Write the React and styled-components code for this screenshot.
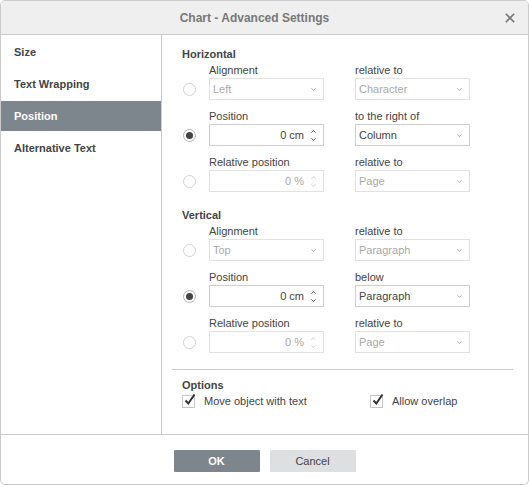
import React from "react";
import styled, { createGlobalStyle } from "styled-components";

const Global = createGlobalStyle`
  html, body { margin: 0; padding: 0; background: #fff; }
  body { font-family: "Liberation Sans", Arial, sans-serif; font-size: 11px; color: #444; }
  * { box-sizing: border-box; }
`;

const Dialog = styled.div`
  width: 529px;
  height: 485px;
  border: 1px solid #cbcbcb;
  border-radius: 5px;
  display: flex;
  flex-direction: column;
  overflow: hidden;
  background: #fff;
`;

const Header = styled.div`
  height: 34px;
  flex: none;
  background: #efefef;
  border-bottom: 1px solid #cbcbcb;
  display: flex;
  align-items: center;
`;

const Title = styled.div`
  flex: 1;
  text-align: center;
  padding-left: 8px;
  font-size: 12px;
  font-weight: bold;
  color: #787878;
  line-height: 14px;
  padding-top: 1px;
`;

const CloseButton = styled.div`
  width: 20px;
  height: 20px;
  margin-right: 8px;
  display: flex;
  align-items: center;
  justify-content: center;
`;

const Main = styled.div`
  flex: 1;
  display: flex;
  min-height: 0;
`;

const Sidebar = styled.div`
  width: 161px;
  flex: none;
  border-right: 1px solid #cbcbcb;
  padding-top: 2px;
`;

const NavItem = styled.div`
  height: 30px;
  margin-bottom: 2px;
  padding-left: 13px;
  display: flex;
  align-items: center;
  font-weight: bold;
  color: ${(p) => (p.$active ? "#fff" : "#444")};
  background: ${(p) => (p.$active ? "#7e868d" : "transparent")};
`;

const Content = styled.div`
  flex: 1;
  padding: 12px 15px 0 20px;
`;

const SectionTitle = styled.div`
  font-weight: bold;
  line-height: 14px;
  color: #444;
  margin-top: ${(p) => p.$mt || 0}px;
`;

const Rows = styled.div`
  display: flex;
  flex-direction: column;
  gap: 9px;
  margin-top: 2px;
`;

const Row = styled.div`
  display: flex;
  align-items: flex-end;
`;

const RadioCell = styled.div`
  width: 27px;
  height: 22px;
  flex: none;
  display: flex;
  align-items: center;
  padding-left: 1px;
`;

const Radio = styled.div`
  width: 13px;
  height: 13px;
  border-radius: 50%;
  border: 1px solid ${(p) => (p.$checked ? "#b5b5b5" : "#d3d3d3")};
  background: #fff;
  display: flex;
  align-items: center;
  justify-content: center;
  &::after {
    content: "";
    display: ${(p) => (p.$checked ? "block" : "none")};
    width: 7px;
    height: 7px;
    border-radius: 50%;
    background: #444;
  }
`;

const Field = styled.div`
  width: 115px;
  flex: none;
  margin-left: ${(p) => p.$ml || 0}px;
  display: flex;
  flex-direction: column;
`;

const Label = styled.div`
  line-height: 14px;
  margin-bottom: 1px;
  color: #444;
  white-space: nowrap;
`;

const Box = styled.div`
  height: 22px;
  border: 1px solid ${(p) => (p.$disabled ? "#e2e2e2" : "#cfcfcf")};
  background: #fff;
  display: flex;
  align-items: center;
  color: ${(p) => (p.$disabled ? "#a9a9a9" : "#444")};
`;

const BoxText = styled.div`
  flex: 1;
  padding-left: 3px;
  padding-right: ${(p) => (p.$right ? "3px" : "0")};
  text-align: ${(p) => (p.$right ? "right" : "left")};
  line-height: 14px;
`;

const ArrowSlot = styled.div`
  width: 16px;
  display: flex;
  flex-direction: column;
  align-items: center;
  justify-content: center;
  gap: 5px;
  padding-right: 3px;
  color: ${(p) => p.$color};
`;

const Separator = styled.div`
  height: 1px;
  background: #cbcbcb;
  margin: 16px 0 8px -10px;
`;

const CheckRow = styled.div`
  display: flex;
  margin-top: 2px;
`;

const CheckItem = styled.div`
  display: flex;
  align-items: center;
  width: ${(p) => (p.$w ? `${p.$w}px` : "auto")};
`;

const CheckBox = styled.div`
  width: 13px;
  height: 13px;
  border: 1px solid #c8c8c8;
  background: #fff;
  position: relative;
  margin-right: 9px;
  flex: none;
`;

const CheckMark = styled.svg`
  position: absolute;
  left: 1px;
  top: -3px;
`;

const CheckLabel = styled.span`
  line-height: 14px;
  color: #444;
`;

const Footer = styled.div`
  height: 50px;
  flex: none;
  border-top: 1px solid #cbcbcb;
  display: flex;
  justify-content: center;
  align-items: flex-start;
  padding-top: 15px;
  gap: 10px;
`;

const Button = styled.div`
  width: 86px;
  height: 22px;
  display: flex;
  align-items: center;
  justify-content: center;
  background: ${(p) => (p.$primary ? "#7e868d" : "#dedfe0")};
  color: ${(p) => (p.$primary ? "#fff" : "#444")};
  font-weight: ${(p) => (p.$primary ? "bold" : "normal")};
  border-radius: 1px;
`;

const Chevron = ({ up }) => (
  <svg width={5} height={3} viewBox="0 0 5 3" style={{ display: "block" }}>
    <path
      d={up ? "M0.5 2.7 L2.5 0.5 L4.5 2.7" : "M0.5 0.3 L2.5 2.5 L4.5 0.3"}
      fill="none"
      stroke="currentColor"
      strokeWidth="0.9"
    />
  </svg>
);

const Select = ({ value, disabled }) => (
  <Box $disabled={disabled}>
    <BoxText>{value}</BoxText>
    <ArrowSlot $color="#a8a8a8">
      <Chevron />
    </ArrowSlot>
  </Box>
);

const Spin = ({ value, disabled }) => (
  <Box $disabled={disabled}>
    <BoxText $right>{value}</BoxText>
    <ArrowSlot $color={disabled ? "#c8c8c8" : "#555"}>
      <Chevron up />
      <Chevron />
    </ArrowSlot>
  </Box>
);

const OptionRow = ({ checked, label, control, label2, select }) => (
  <Row>
    <RadioCell>
      <Radio $checked={checked} />
    </RadioCell>
    <Field>
      <Label>{label}</Label>
      {control}
    </Field>
    <Field $ml={31}>
      <Label>{label2}</Label>
      {select}
    </Field>
  </Row>
);

const Check = ({ label, w }) => (
  <CheckItem $w={w}>
    <CheckBox>
      <CheckMark width="12" height="13" viewBox="0 0 12 13">
        <path d="M1.5 7.5 L4.3 10.5 L10.5 1.5" fill="none" stroke="#333" strokeWidth="2" />
      </CheckMark>
    </CheckBox>
    <CheckLabel>{label}</CheckLabel>
  </CheckItem>
);

export default function App() {
  return (
    <>
      <Global />
      <Dialog>
        <Header>
          <Title>Chart - Advanced Settings</Title>
          <CloseButton>
            <svg width="10" height="10" viewBox="0 0 10 10">
              <path d="M0.8 0.8 L9.2 9.2 M9.2 0.8 L0.8 9.2" stroke="#777" strokeWidth="1.6" />
            </svg>
          </CloseButton>
        </Header>
        <Main>
          <Sidebar>
            <NavItem>Size</NavItem>
            <NavItem>Text Wrapping</NavItem>
            <NavItem $active>Position</NavItem>
            <NavItem>Alternative Text</NavItem>
          </Sidebar>
          <Content>
            <SectionTitle>Horizontal</SectionTitle>
            <Rows>
              <OptionRow
                label="Alignment"
                control={<Select value="Left" disabled />}
                label2="relative to"
                select={<Select value="Character" disabled />}
              />
              <OptionRow
                checked
                label="Position"
                control={<Spin value="0 cm" />}
                label2="to the right of"
                select={<Select value="Column" />}
              />
              <OptionRow
                label="Relative position"
                control={<Spin value="0 %" disabled />}
                label2="relative to"
                select={<Select value="Page" disabled />}
              />
            </Rows>
            <SectionTitle $mt={16}>Vertical</SectionTitle>
            <Rows>
              <OptionRow
                label="Alignment"
                control={<Select value="Top" disabled />}
                label2="relative to"
                select={<Select value="Paragraph" disabled />}
              />
              <OptionRow
                checked
                label="Position"
                control={<Spin value="0 cm" />}
                label2="below"
                select={<Select value="Paragraph" />}
              />
              <OptionRow
                label="Relative position"
                control={<Spin value="0 %" disabled />}
                label2="relative to"
                select={<Select value="Page" disabled />}
              />
            </Rows>
            <Separator />
            <SectionTitle>Options</SectionTitle>
            <CheckRow>
              <Check label="Move object with text" w={188} />
              <Check label="Allow overlap" />
            </CheckRow>
          </Content>
        </Main>
        <Footer>
          <Button $primary>OK</Button>
          <Button>Cancel</Button>
        </Footer>
      </Dialog>
    </>
  );
}
